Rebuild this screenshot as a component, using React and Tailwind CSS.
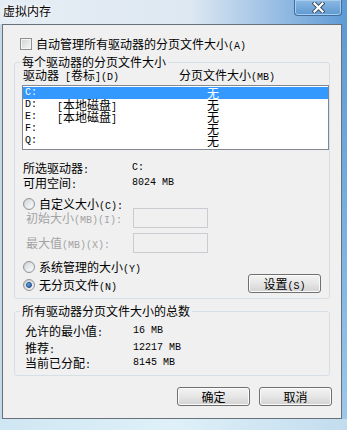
import React from 'react';

const MONO = "font-['Liberation_Mono',monospace] text-[10px] whitespace-pre";

// splits a label so ASCII runs get the narrow mono face, like SimSun half-width glyphs
function T({ s, className = '' }) {
  const parts = s.split(/([\x20-\x7e]+)/);
  return (
    <span className={className}>
      {parts.map((p, i) =>
        p === '' ? null : /^[\x20-\x7e]+$/.test(p) ? (
          <span key={i} className={MONO + ' leading-[0px]'}>{p}</span>
        ) : (
          <span key={i}>{p}</span>
        )
      )}
    </span>
  );
}

function Radio({ checked }) {
  return (
    <div className="w-[12px] h-[12px] rounded-full border border-[#8f969c] bg-gradient-to-br from-[#c9cdd1] to-[#f4f4f4] flex items-center justify-center shrink-0">
      {checked ? (
        <div className="w-[6px] h-[6px] rounded-full bg-gradient-to-br from-[#7ab6ec] to-[#1a5fa8] border border-[#1c4f86]" />
      ) : (
        <div className="w-[8px] h-[8px] rounded-full bg-gradient-to-br from-[#d4d7da] to-[#fbfbfb]" />
      )}
    </div>
  );
}

function Button({ label }) {
  return (
    <button className="w-[73px] h-[19px] rounded-[3px] border border-[#707070] bg-gradient-to-b from-[#f3f3f3] via-[#e6e6e6] to-[#d2d2d2] shadow-[inset_0_0_0_1px_#fbfbfb] flex items-center justify-center leading-[12px] text-black">
      <T s={label} />
    </button>
  );
}

const drives = [
  ['C:', '', true],
  ['D:', '[本地磁盘]'],
  ['E:', '[本地磁盘]'],
  ['F:', ''],
  ['Q:', ''],
];

export default function App() {
  return (
    <div className="w-[347px] h-[430px] overflow-hidden flex flex-col bg-[#d2e8f4] font-['Noto_Sans_CJK_SC',sans-serif] text-[12px] leading-[12px] text-black select-none">
      {/* title bar */}
      <div className="h-[24px] shrink-0 flex items-start bg-gradient-to-r from-[#e6edf4] via-[#dde8f2] via-55% to-[#5e9ad5]">
        <div className="pl-[3px] pt-[5px] [text-shadow:0_0_6px_#ffffff,0_0_3px_#ffffff]">虚拟内存</div>
        <div className="ml-auto mr-[5px] w-[48px] h-[16px] rounded-b-[4px] border-x border-b border-[#3f6f9f] bg-gradient-to-b from-[#8bb9e4] to-[#5f98d1] shadow-[inset_0_0_0_1px_#a9cdef] flex items-center justify-center">
          <svg width="13" height="11" viewBox="0 0 13 11">
            <path d="M2.5 1.5 L10.5 9.5 M10.5 1.5 L2.5 9.5" stroke="#3b4b5c" strokeWidth="4" strokeLinecap="square" />
            <path d="M2.5 1.5 L10.5 9.5 M10.5 1.5 L2.5 9.5" stroke="#ffffff" strokeWidth="2.2" strokeLinecap="square" />
          </svg>
        </div>
      </div>

      <div className="flex shrink-0">
        <div className="w-[2px] bg-[#c6d9e8]" />
        <div className="w-[340px] h-[395px] border border-[#68717a] bg-[#f0f0f0] flex flex-col">
          {/* auto manage checkbox */}
          <div className="mt-[13px] ml-[17px] flex items-center gap-[4px] h-[12px]">
            <div className="w-[12px] h-[12px] border border-[#8e8f8f] bg-gradient-to-br from-[#cfd1d3] to-[#f7f7f7] shadow-[inset_0_0_0_1px_#f4f4f4]" />
            <T s="自动管理所有驱动器的分页文件大小(A)" />
          </div>

          {/* per-drive group */}
          <fieldset className="mt-[6px] ml-[11px] w-[316px] border border-[#d5dfe5] rounded-[3px] pb-[5px]">
            <legend className="ml-[5px] px-[2px] leading-[12px]">每个驱动器的分页文件大小</legend>
            <div className="mt-[1px] ml-[8px] flex h-[12px]">
              <T s="驱动器 [卷标](D)" className="w-[156px]" />
              <T s="分页文件大小(MB)" />
            </div>
            <div className="mt-[4px] ml-[7px] w-[307px] h-[65px] border border-[#828790] bg-white pt-[1px]">
              {drives.map(([d, label, sel]) => (
                <div
                  key={d}
                  className={
                    'h-[12px] flex items-center pl-[2px] ' +
                    (sel ? 'bg-[#3399ff] text-white' : 'text-black')
                  }
                >
                  <span className={MONO + ' w-[32px]'}>{d}</span>
                  <T s={label} className="w-[150px]" />
                  <span>无</span>
                </div>
              ))}
            </div>

            <div className="mt-[12px] ml-[8px] flex h-[12px]">
              <T s="所选驱动器:" className="w-[109px]" />
              <span className={MONO}>C:</span>
            </div>
            <div className="mt-[3px] ml-[8px] flex h-[12px]">
              <T s="可用空间:" className="w-[109px]" />
              <span className={MONO}>8024 MB</span>
            </div>

            <div className="mt-[9px] ml-[8px] flex items-center gap-[4px] h-[12px]">
              <Radio />
              <T s="自定义大小(C):" />
            </div>
            <div className="mt-[-2px] ml-[11px] flex items-center h-[20px] text-[#a3a3a3]">
              <T s="初始大小(MB)(I):" className="w-[107px]" />
              <div className="w-[75px] h-[20px] border border-[#c9cdd2] bg-[#f0f0f0]" />
            </div>
            <div className="mt-[5px] ml-[11px] flex items-center h-[20px] text-[#a3a3a3]">
              <T s="最大值(MB)(X):" className="w-[107px]" />
              <div className="w-[75px] h-[20px] border border-[#c9cdd2] bg-[#f0f0f0]" />
            </div>

            <div className="mt-[8px] ml-[8px] flex items-center gap-[4px] h-[12px]">
              <Radio />
              <T s="系统管理的大小(Y)" />
            </div>
            <div className="mt-[1px] ml-[8px] mr-[8px] flex items-end justify-between">
              <div className="mb-[2px] flex items-center gap-[4px] h-[12px]">
                <Radio checked />
                <T s="无分页文件(N)" />
              </div>
              <Button label="设置(S)" />
            </div>
          </fieldset>

          {/* totals group */}
          <fieldset className="mt-[6px] ml-[11px] w-[316px] border border-[#d5dfe5] rounded-[3px] pb-[6px]">
            <legend className="ml-[5px] px-[2px] leading-[12px]">所有驱动器分页文件大小的总数</legend>
            <div className="mt-[8px] ml-[10px] flex h-[12px]">
              <T s="允许的最小值:" className="w-[108px]" />
              <span className={MONO}>16 MB</span>
            </div>
            <div className="mt-[5px] ml-[10px] flex h-[12px]">
              <T s="推荐:" className="w-[108px]" />
              <span className={MONO}>12217 MB</span>
            </div>
            <div className="mt-[3px] ml-[10px] flex h-[12px]">
              <T s="当前已分配:" className="w-[108px]" />
              <span className={MONO}>8145 MB</span>
            </div>
          </fieldset>

          <div className="mt-[11px] mr-[9px] flex justify-end gap-[9px]">
            <Button label="确定" />
            <Button label="取消" />
          </div>
        </div>
        <div className="w-[5px] bg-gradient-to-b from-[#5e9ad5] via-[#78b0e2] to-[#9cc8ea]" />
      </div>

      <div className="flex-1 bg-gradient-to-r from-[#cfe7f3] via-[#dff0f8] to-[#c2dcee]" />
    </div>
  );
}
